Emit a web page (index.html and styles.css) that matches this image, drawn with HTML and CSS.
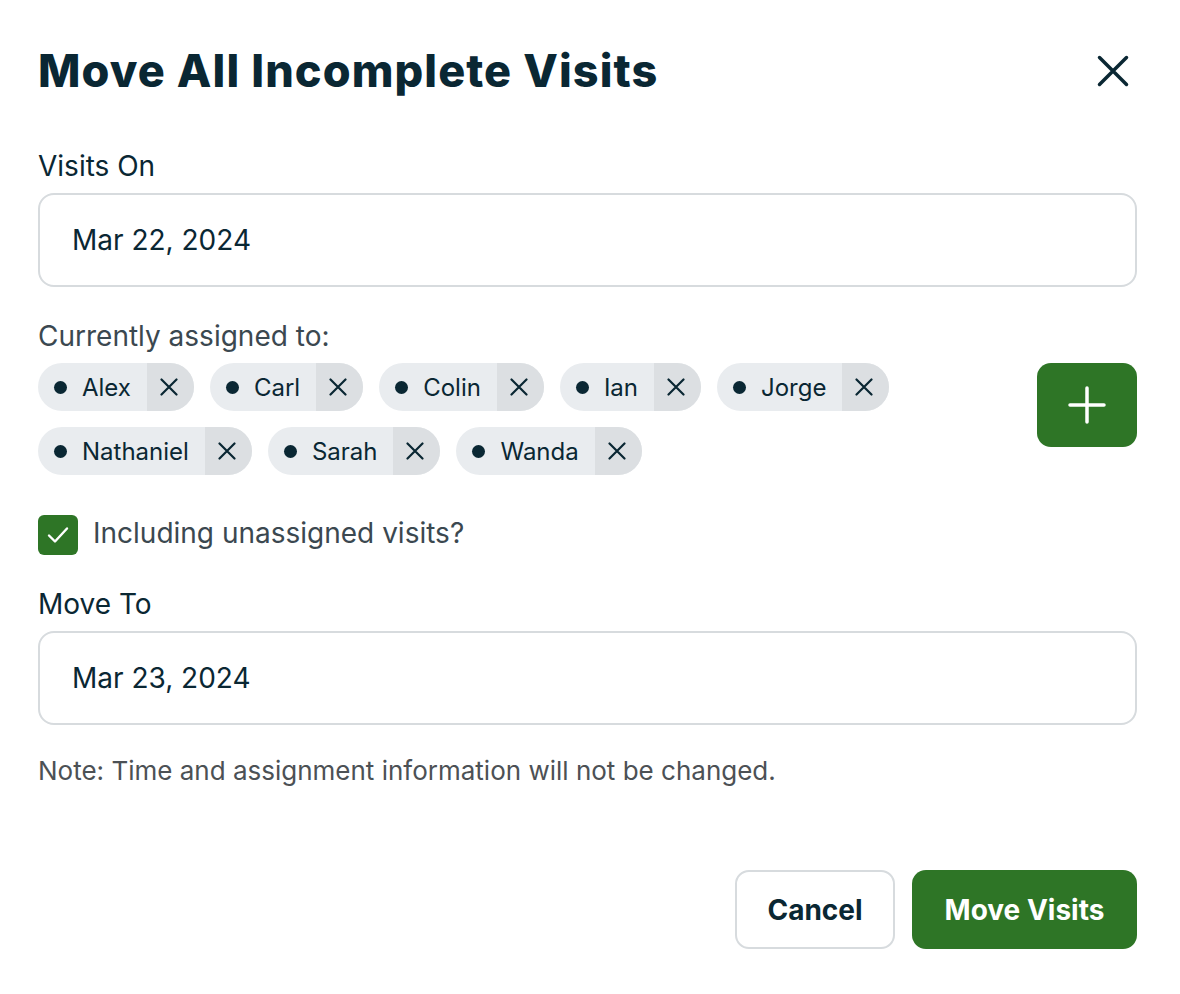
FILE: index.html
```html
<!DOCTYPE html>
<html>
<head>
<meta charset="utf-8">
<link rel="stylesheet" href="styles.css">
</head>
<body>
<div class="modal">
  <div class="header">
    <h1 class="title">Move All Incomplete Visits</h1>
    <button class="close" aria-label="Close">
      <svg width="34" height="34" viewBox="0 0 34 34"><path d="M3.5 3.5L30.5 30.5M30.5 3.5L3.5 30.5" stroke="#0a2733" stroke-width="3.5" stroke-linecap="round" fill="none"/></svg>
    </button>
  </div>

  <label class="label">Visits On</label>
  <div class="input">Mar 22, 2024</div>

  <div class="label sub">Currently assigned to:</div>
  <div class="assign-row">
    <div class="chips">
      <div class="chip"><span class="chip-main"><span class="dot"></span>Alex</span><span class="chip-x"><svg width="18" height="18" viewBox="0 0 18 18"><path d="M1.5 1.5L16.5 16.5M16.5 1.5L1.5 16.5" stroke="#0a2733" stroke-width="2.2" stroke-linecap="round"/></svg></span></div>
      <div class="chip"><span class="chip-main"><span class="dot"></span>Carl</span><span class="chip-x"><svg width="18" height="18" viewBox="0 0 18 18"><path d="M1.5 1.5L16.5 16.5M16.5 1.5L1.5 16.5" stroke="#0a2733" stroke-width="2.2" stroke-linecap="round"/></svg></span></div>
      <div class="chip"><span class="chip-main"><span class="dot"></span>Colin</span><span class="chip-x"><svg width="18" height="18" viewBox="0 0 18 18"><path d="M1.5 1.5L16.5 16.5M16.5 1.5L1.5 16.5" stroke="#0a2733" stroke-width="2.2" stroke-linecap="round"/></svg></span></div>
      <div class="chip"><span class="chip-main"><span class="dot"></span>Ian</span><span class="chip-x"><svg width="18" height="18" viewBox="0 0 18 18"><path d="M1.5 1.5L16.5 16.5M16.5 1.5L1.5 16.5" stroke="#0a2733" stroke-width="2.2" stroke-linecap="round"/></svg></span></div>
      <div class="chip"><span class="chip-main"><span class="dot"></span>Jorge</span><span class="chip-x"><svg width="18" height="18" viewBox="0 0 18 18"><path d="M1.5 1.5L16.5 16.5M16.5 1.5L1.5 16.5" stroke="#0a2733" stroke-width="2.2" stroke-linecap="round"/></svg></span></div>
      <div class="chip"><span class="chip-main"><span class="dot"></span>Nathaniel</span><span class="chip-x"><svg width="18" height="18" viewBox="0 0 18 18"><path d="M1.5 1.5L16.5 16.5M16.5 1.5L1.5 16.5" stroke="#0a2733" stroke-width="2.2" stroke-linecap="round"/></svg></span></div>
      <div class="chip"><span class="chip-main"><span class="dot"></span>Sarah</span><span class="chip-x"><svg width="18" height="18" viewBox="0 0 18 18"><path d="M1.5 1.5L16.5 16.5M16.5 1.5L1.5 16.5" stroke="#0a2733" stroke-width="2.2" stroke-linecap="round"/></svg></span></div>
      <div class="chip"><span class="chip-main"><span class="dot"></span>Wanda</span><span class="chip-x"><svg width="18" height="18" viewBox="0 0 18 18"><path d="M1.5 1.5L16.5 16.5M16.5 1.5L1.5 16.5" stroke="#0a2733" stroke-width="2.2" stroke-linecap="round"/></svg></span></div>
    </div>
    <button class="add" aria-label="Add">
      <svg width="38" height="38" viewBox="0 0 38 38"><path d="M19 2V36M2 19H36" stroke="#ffffff" stroke-width="3.5" stroke-linecap="round"/></svg>
    </button>
  </div>

  <div class="check-row">
    <span class="checkbox">
      <svg width="24" height="24" viewBox="0 0 24 24"><path d="M3 12.5L9 18.5L21 5.5" stroke="#ffffff" stroke-width="2.4" stroke-linecap="round" stroke-linejoin="round" fill="none"/></svg>
    </span>
    <span class="check-label">Including unassigned visits?</span>
  </div>

  <label class="label move-to">Move To</label>
  <div class="input">Mar 23, 2024</div>

  <p class="note">Note: Time and assignment information will not be changed.</p>

  <div class="actions">
    <button class="btn cancel">Cancel</button>
    <button class="btn primary">Move Visits</button>
  </div>
</div>
</body>
</html>
```

FILE: styles.css
```css
* { box-sizing: border-box; }
html, body { margin: 0; padding: 0; background: #ffffff; }
body {
  font-family: Inter, "Noto Sans", "Liberation Sans", sans-serif;
  color: #0a2733;
}
.modal {
  width: 1180px;
  padding: 45px 43px 0 38px;
}
.header {
  display: flex;
  align-items: center;
  justify-content: space-between;
  height: 52px;
}
.title {
  margin: 0;
  font-size: 45px;
  line-height: 52px;
  font-weight: 800;
  letter-spacing: 1.1px;
  color: #0a2733;
}
.close {
  border: none;
  background: none;
  padding: 0;
  width: 34px;
  height: 34px;
  margin-right: 7px;
  display: flex;
}
.label {
  display: block;
  font-size: 28px;
  line-height: 34px;
  color: #0a2733;
  margin-top: 52px;
  margin-bottom: 10px;
}
.label.sub {
  color: #3b4850;
  margin-top: 32px;
  margin-bottom: 10px;
}
.label.move-to {
  margin-top: 32px;
}
.input {
  height: 94px;
  border: 2px solid #d7dbde;
  border-radius: 16px;
  padding: 0 32px;
  display: flex;
  align-items: center;
  font-size: 28px;
  color: #0a2733;
}
.assign-row {
  display: flex;
  align-items: flex-start;
}
.chips {
  flex: 1;
  display: flex;
  flex-wrap: wrap;
  gap: 16px 16px;
  padding-right: 130px;
}
.chip {
  display: flex;
  height: 48px;
  border-radius: 24px;
  overflow: hidden;
  background: #e9ecef;
  font-size: 24px;
  color: #0a2733;
}
.chip-main {
  display: flex;
  align-items: center;
  padding: 0 16px 0 16px;
}
.dot {
  width: 13px;
  height: 13px;
  border-radius: 50%;
  background: #0a2733;
  margin-right: 15px;
}
.chip-x {
  width: 47px;
  background: #dcdfe2;
  display: flex;
  align-items: center;
  justify-content: center;
  padding-right: 3px;
}
.add {
  width: 100px;
  height: 84px;
  border: none;
  border-radius: 14px;
  background: #2e7526;
  display: flex;
  align-items: center;
  justify-content: center;
  padding: 0;
}
.check-row {
  display: flex;
  align-items: center;
  margin-top: 40px;
  height: 40px;
}
.checkbox {
  width: 40px;
  height: 40px;
  border-radius: 6px;
  background: #2e7526;
  display: flex;
  align-items: center;
  justify-content: center;
}
.check-label {
  margin-left: 15px;
  font-size: 28px;
  color: #3b4850;
  position: relative;
  top: -2px;
}
.note {
  margin: 31px 0 0;
  font-size: 26px;
  line-height: 30px;
  color: #4c5155;
}
.actions {
  display: flex;
  justify-content: flex-end;
  gap: 17px;
  margin-top: 84px;
}
.btn {
  height: 79px;
  border-radius: 14px;
  font-family: Inter, "Noto Sans", "Liberation Sans", sans-serif;
  font-size: 28px;
  font-weight: 700;
  padding: 0;
}
.cancel {
  width: 160px;
  background: #ffffff;
  border: 2px solid #d7dbde;
  color: #0a2733;
}
.primary {
  width: 225px;
  background: #2e7526;
  border: none;
  color: #ffffff;
}
```
